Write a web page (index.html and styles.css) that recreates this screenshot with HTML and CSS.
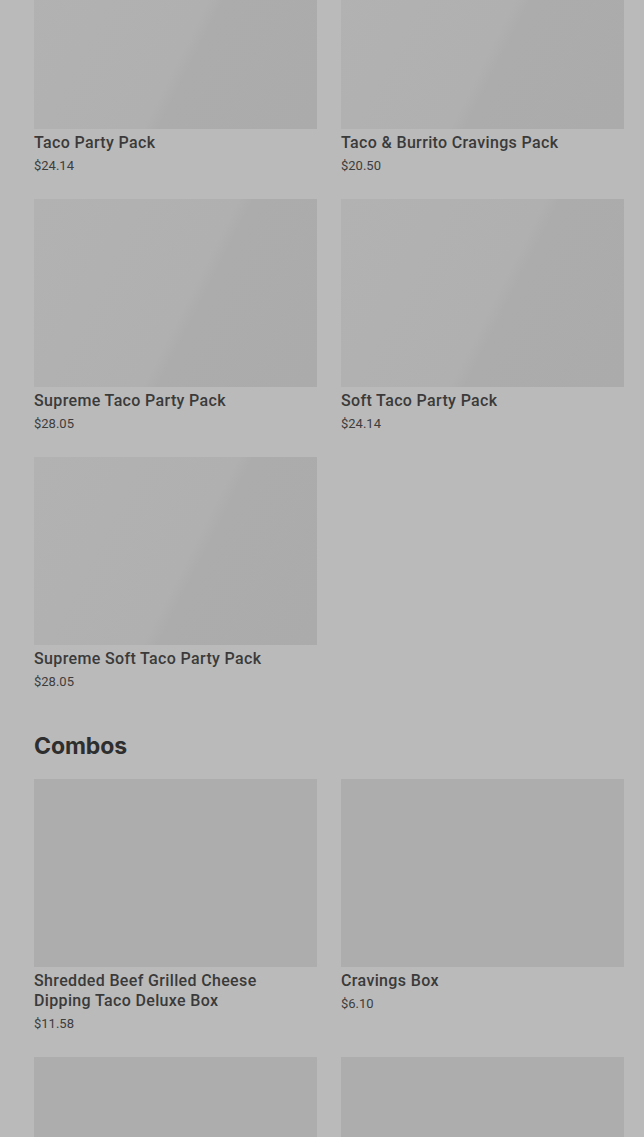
FILE: index.html
```html
<!DOCTYPE html>
<html lang="en">
<head>
    <meta charset="UTF-8">
    <title>Menu</title>
    <link rel="stylesheet" href="styles.css">
</head>
<body>
    <div class="menu">
        <section class="category first">
            <div class="grid">
                <div class="item">
                    <div class="thumb"></div>
                    <div class="name">Taco Party Pack</div>
                    <div class="price">$24.14</div>
                </div>
                <div class="item">
                    <div class="thumb"></div>
                    <div class="name">Taco &amp; Burrito Cravings Pack</div>
                    <div class="price">$20.50</div>
                </div>
                <div class="item">
                    <div class="thumb"></div>
                    <div class="name">Supreme Taco Party Pack</div>
                    <div class="price">$28.05</div>
                </div>
                <div class="item">
                    <div class="thumb"></div>
                    <div class="name">Soft Taco Party Pack</div>
                    <div class="price">$24.14</div>
                </div>
                <div class="item">
                    <div class="thumb"></div>
                    <div class="name">Supreme Soft Taco Party Pack</div>
                    <div class="price">$28.05</div>
                </div>
            </div>
        </section>

        <section class="category">
            <h2>Combos</h2>
            <div class="grid">
                <div class="item">
                    <div class="thumb flat"></div>
                    <div class="name">Shredded Beef Grilled Cheese Dipping Taco Deluxe Box</div>
                    <div class="price">$11.58</div>
                </div>
                <div class="item">
                    <div class="thumb flat"></div>
                    <div class="name">Cravings Box</div>
                    <div class="price">$6.10</div>
                </div>
                <div class="item">
                    <div class="thumb flat"></div>
                </div>
                <div class="item">
                    <div class="thumb flat"></div>
                </div>
            </div>
        </section>
    </div>
</body>
</html>
```

FILE: styles.css
```css
body {
    margin: 0;
    height: 1137px;
    overflow: hidden;
    background-color: #bababa;
    font-family: 'Roboto', 'Liberation Sans', sans-serif;
    color: #333;
}

.menu {
    padding: 0 20px 0 34px;
}

/* page is scrolled part way into the first category */
.category.first {
    margin-top: -59px;
}

.category h2 {
    margin: 40px 0 19px;
    font-family: 'Inter', 'Liberation Sans', sans-serif;
    font-size: 23px;
    line-height: 28px;
    font-weight: 700;
    color: #2e2e2e;
    letter-spacing: -0.1px;
}

.grid {
    display: grid;
    grid-template-columns: 1fr 1fr;
    column-gap: 24px;
    row-gap: 23px;
}

.thumb {
    height: 188px;
    background: linear-gradient(117deg, #b2b2b2 0%, #b0b0b0 54%, #acacac 58%, #ababab 100%);
}

.thumb.flat {
    background: #adadad;
}

.name {
    margin-top: 4px;
    font-size: 16px;
    line-height: 20px;
    font-weight: 500;
    letter-spacing: 0.35px;
    color: #3a3a3a;
}

.price {
    margin-top: 3px;
    font-size: 13px;
    line-height: 20px;
    color: #3d3d3d;
}
```
